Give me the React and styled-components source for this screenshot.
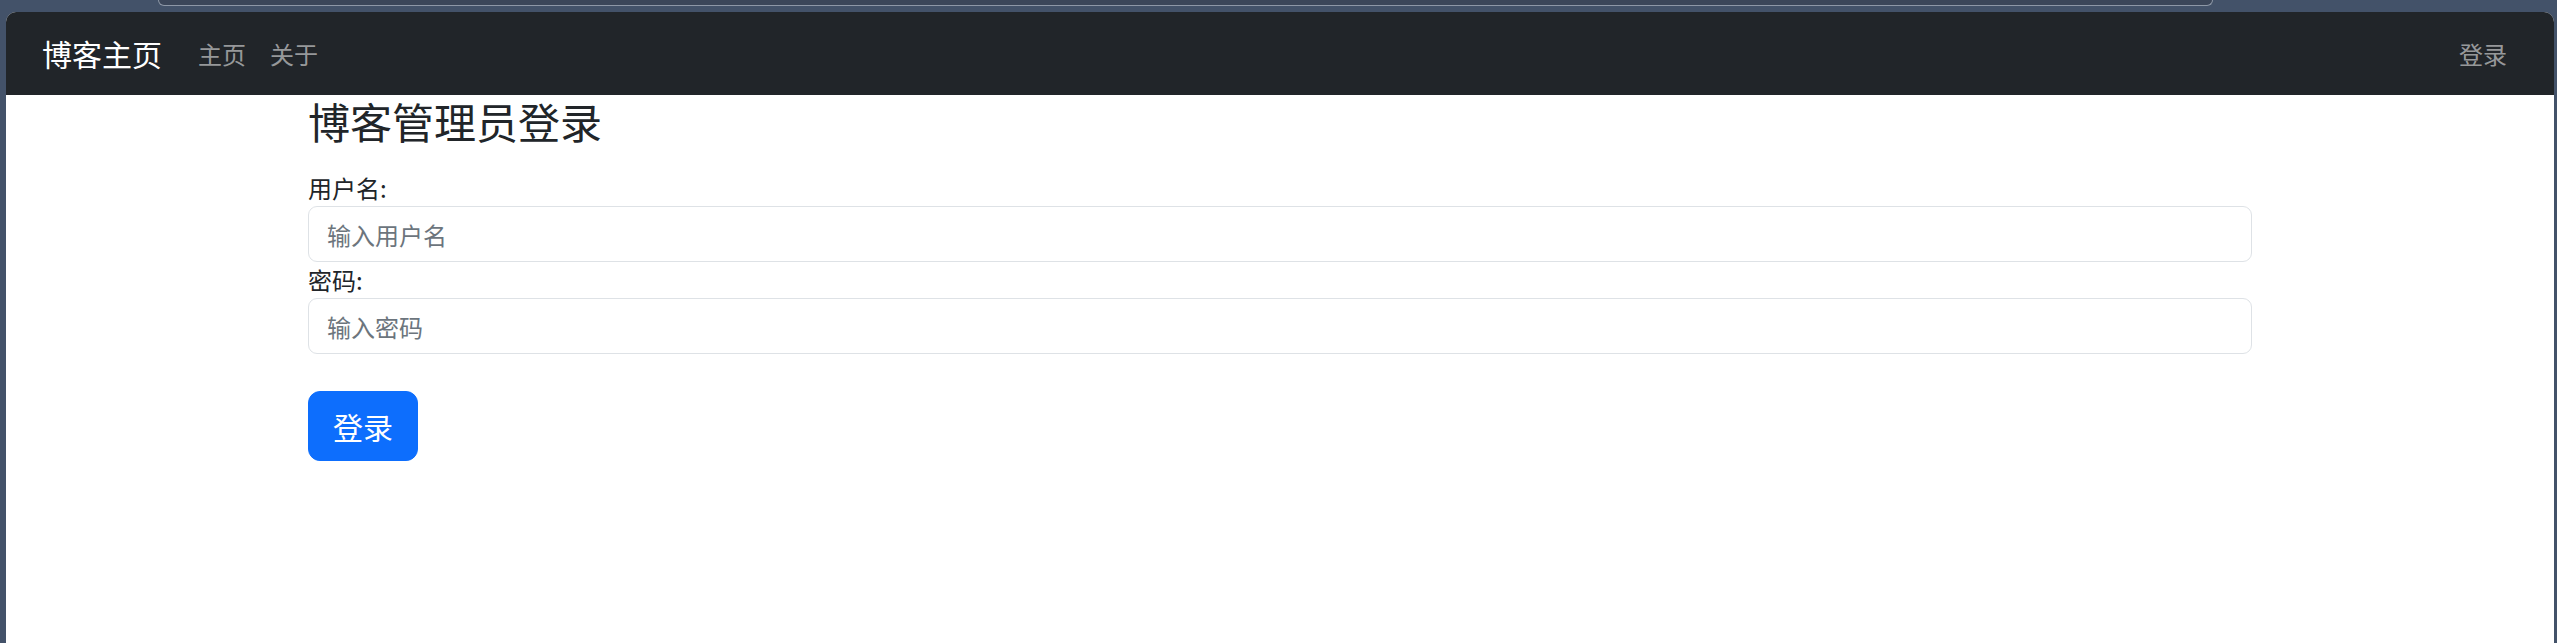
import React from "react";
import styled, { createGlobalStyle } from "styled-components";

const GlobalStyle = createGlobalStyle`
  html, body {
    margin: 0;
    padding: 0;
    background: #435269;
  }
  body {
    font-family: "Noto Sans CJK SC", "Noto Sans", "Liberation Sans", sans-serif;
  }
  * {
    box-sizing: border-box;
  }
`;

const Screen = styled.div`
  display: flex;
  flex-direction: column;
  height: 643px;
  background: #435269;
  overflow: hidden;
`;

const TopStrip = styled.div`
  height: 12px;
  padding: 0 344px 0 158px;
`;

const AddressTab = styled.div`
  height: 6px;
  background: #3b4659;
  border: 1px solid #8d97a6;
  border-top: none;
  border-radius: 0 0 14px 14px;
`;

const Window = styled.div`
  flex: 1;
  margin: 0 3px 0 6px;
  background: #ffffff;
  border-radius: 10px 10px 0 0;
  overflow: hidden;
  display: flex;
  flex-direction: column;
`;

const Navbar = styled.nav`
  height: 83px;
  flex-shrink: 0;
  background: #212529;
  display: flex;
  align-items: center;
  padding: 0 35px 0 36px;
`;

const Brand = styled.a`
  color: #ffffff;
  font-size: 30px;
  line-height: 45px;
  margin-right: 24px;
  text-decoration: none;
`;

const NavList = styled.div`
  display: flex;
  align-items: center;
  margin-left: ${(p) => (p.$end ? "auto" : "0")};
`;

const NavLink = styled.a`
  color: rgba(255, 255, 255, 0.55);
  font-size: 24px;
  line-height: 36px;
  padding: 0 12px;
  text-decoration: none;
`;

const Container = styled.div`
  width: 1980px;
  margin: 0 auto;
  padding: 1px 18px 0;
`;

const Title = styled.h3`
  margin: 0 0 24px;
  font-size: 42px;
  font-weight: 400;
  line-height: 50px;
  color: #212529;
`;

const Label = styled.label`
  display: block;
  font-size: 24px;
  line-height: 36px;
  color: #212529;
`;

const Input = styled.input`
  display: block;
  width: 100%;
  height: 56px;
  padding: 0 18px;
  font-family: inherit;
  font-size: 24px;
  color: #212529;
  background: #ffffff;
  border: 1px solid #dee2e6;
  border-radius: 9px;
  outline: none;
  &::placeholder {
    color: #6c757d;
  }
`;

const SubmitButton = styled.button`
  margin-top: 37px;
  height: 70px;
  padding: 0 24px;
  font-family: inherit;
  font-size: 30px;
  line-height: 45px;
  color: #ffffff;
  background: #0d6efd;
  border: 1px solid #0d6efd;
  border-radius: 12px;
  cursor: pointer;
`;

export default function App() {
  return (
    <>
      <GlobalStyle />
      <Screen>
        <TopStrip>
          <AddressTab />
        </TopStrip>
        <Window>
          <Navbar>
            <Brand href="#">博客主页</Brand>
            <NavList>
              <NavLink href="#">主页</NavLink>
              <NavLink href="#">关于</NavLink>
            </NavList>
            <NavList $end>
              <NavLink href="#">登录</NavLink>
            </NavList>
          </Navbar>
          <Container>
            <Title>博客管理员登录</Title>
            <form onSubmit={(e) => e.preventDefault()}>
              <Label htmlFor="username">用户名:</Label>
              <Input id="username" type="text" placeholder="输入用户名" />
              <Label htmlFor="password">密码:</Label>
              <Input id="password" type="password" placeholder="输入密码" />
              <SubmitButton type="submit">登录</SubmitButton>
            </form>
          </Container>
        </Window>
      </Screen>
    </>
  );
}
